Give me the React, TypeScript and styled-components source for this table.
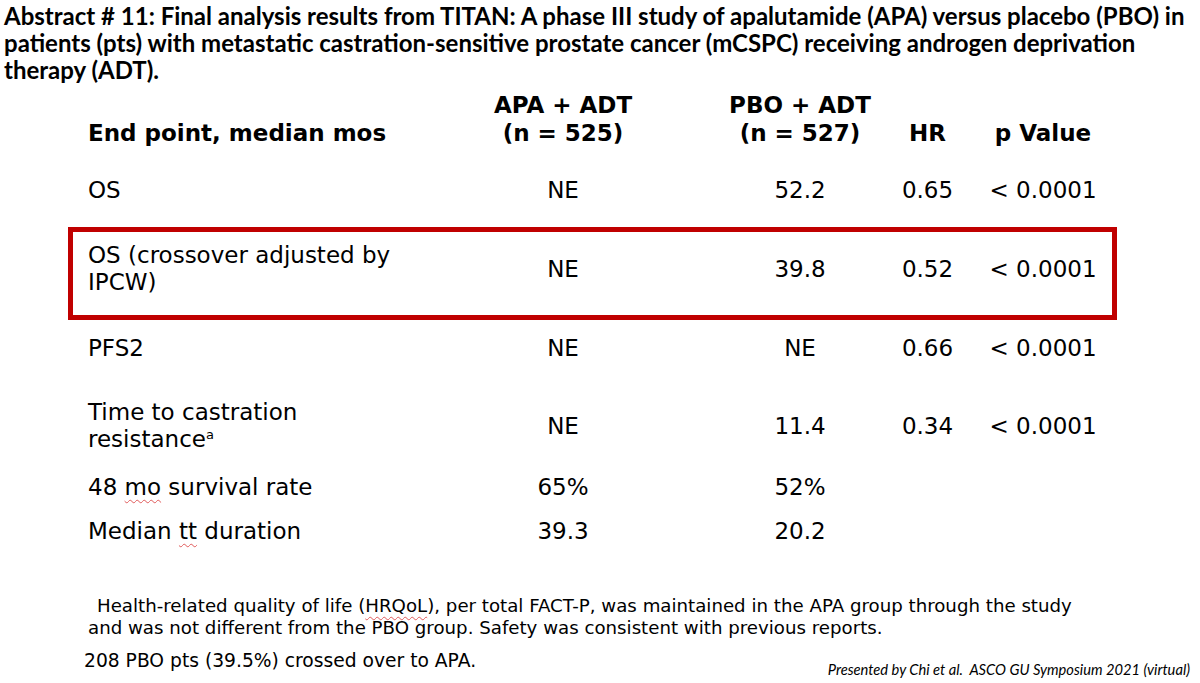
import React from "react";
import styled, { createGlobalStyle } from "styled-components";

const Global = createGlobalStyle`
  html, body { margin: 0; padding: 0; background: #ffffff; }
  body { font-family: "DejaVu Sans", "Verdana", sans-serif; color: #000; }
`;

const Slide = styled.div`
  width: 1200px;
  height: 683px;
  background: #fff;
  overflow: hidden;
  display: flex;
  flex-direction: column;
`;

const Title = styled.h1`
  margin: 2px 0 0 4px;
  font-family: "Lato", "Open Sans", sans-serif;
  font-weight: 700;
  font-size: 24px;
  line-height: 27px;
  color: #000;
`;

const Table = styled.div`
  margin: 8px 0 0 68px;
  width: 1049px;
  display: flex;
  flex-direction: column;
`;

const Row = styled.div<{ $mt?: number }>`
  display: grid;
  grid-template-columns: 392px 166px 234px 95px 136px;
  align-items: center;
  padding-left: 20px;
  margin-top: ${(p) => p.$mt ?? 0}px;
  font-size: 23px;
  line-height: 27px;
`;

const HeadRow = styled(Row)`
  align-items: end;
  font-weight: 700;
  line-height: 28px;
`;

const Boxed = styled(Row)`
  padding: 10px 0 19px 15px;
  border: 5px solid #c00000;
`;

const Label = styled.div`
  white-space: nowrap;
`;

const Cell = styled.div<{ $shift?: number }>`
  text-align: center;
  white-space: nowrap;
  padding-left: ${(p) => p.$shift ?? 0}px;
`;

const Sup = styled.sup`
  font-size: 13px;
  vertical-align: 8px;
  line-height: 0;
`;

const Squiggle = styled.span`
  text-decoration: underline wavy #e05a5a;
  text-decoration-thickness: 1px;
  text-underline-offset: 4px;
`;

const Notes = styled.div`
  margin: 50px 0 0 88px;
  font-size: 18.2px;
  line-height: 22px;
  white-space: nowrap;
`;

const Indent = styled.span`
  padding-left: 9px;
`;

const Bottom = styled.div`
  margin-top: 11px;
  padding: 0 10px 0 84px;
  display: flex;
  justify-content: space-between;
  align-items: flex-start;
  font-size: 18.7px;
  line-height: 22px;
`;

const Credit = styled.div`
  margin-top: 8px;
  font-family: "Lato", "Open Sans", sans-serif;
  font-style: italic;
  font-size: 14.7px;
`;

type R = { label: React.ReactNode; apa: string; pbo: string; hr?: string; p?: string; mt: number };

const rows: R[] = [
  { label: "PFS2", apa: "NE", pbo: "NE", hr: "0.66", p: "< 0.0001", mt: 15 },
  {
    label: (
      <>
        Time to castration
        <br />
        resistance<Sup>a</Sup>
      </>
    ),
    apa: "NE",
    pbo: "11.4",
    hr: "0.34",
    p: "< 0.0001",
    mt: 37,
  },
  {
    label: (
      <>
        48 <Squiggle>mo</Squiggle> survival rate
      </>
    ),
    apa: "65%",
    pbo: "52%",
    mt: 21,
  },
  {
    label: (
      <>
        Median <Squiggle>tt</Squiggle> duration
      </>
    ),
    apa: "39.3",
    pbo: "20.2",
    mt: 17,
  },
];

function Cells({ apa, pbo, hr, p }: { apa: string; pbo: string; hr?: string; p?: string }) {
  return (
    <>
      <Cell>{apa}</Cell>
      <Cell $shift={74}>{pbo}</Cell>
      <Cell>{hr ?? ""}</Cell>
      <Cell>{p ?? ""}</Cell>
    </>
  );
}

export default function App() {
  return (
    <Slide>
      <Global />
      <Title>
        Abstract # 11: Final analysis results from TITAN: A phase III study of apalutamide (APA) versus placebo (PBO) in
        <br />
        patients (pts) with metastatic castration-sensitive prostate cancer (mCSPC) receiving androgen deprivation
        <br />
        therapy (ADT).
      </Title>
      <Table>
        <HeadRow>
          <Label>End point, median mos</Label>
          <Cell>
            APA + ADT
            <br />
            (n = 525)
          </Cell>
          <Cell $shift={74}>
            PBO + ADT
            <br />
            (n = 527)
          </Cell>
          <Cell>HR</Cell>
          <Cell>p Value</Cell>
        </HeadRow>
        <Row $mt={30}>
          <Label>OS</Label>
          <Cells apa="NE" pbo="52.2" hr="0.65" p="< 0.0001" />
        </Row>
        <Boxed $mt={23}>
          <Label>
            OS (crossover adjusted by
            <br />
            IPCW)
          </Label>
          <Cells apa="NE" pbo="39.8" hr="0.52" p="< 0.0001" />
        </Boxed>
        {rows.map((r, i) => (
          <Row key={i} $mt={r.mt}>
            <Label>{r.label}</Label>
            <Cells apa={r.apa} pbo={r.pbo} hr={r.hr} p={r.p} />
          </Row>
        ))}
      </Table>
      <Notes>
        <Indent>
          Health-related quality of life (<Squiggle>HRQoL</Squiggle>), per total FACT-P, was maintained in the APA group through the study
        </Indent>
        <br />
        and was not different from the PBO group. Safety was consistent with previous reports.
      </Notes>
      <Bottom>
        <div>208 PBO pts (39.5%) crossed over to APA.</div>
        <Credit>Presented by Chi et al.&nbsp; ASCO GU Symposium 2021 (virtual)</Credit>
      </Bottom>
    </Slide>
  );
}
